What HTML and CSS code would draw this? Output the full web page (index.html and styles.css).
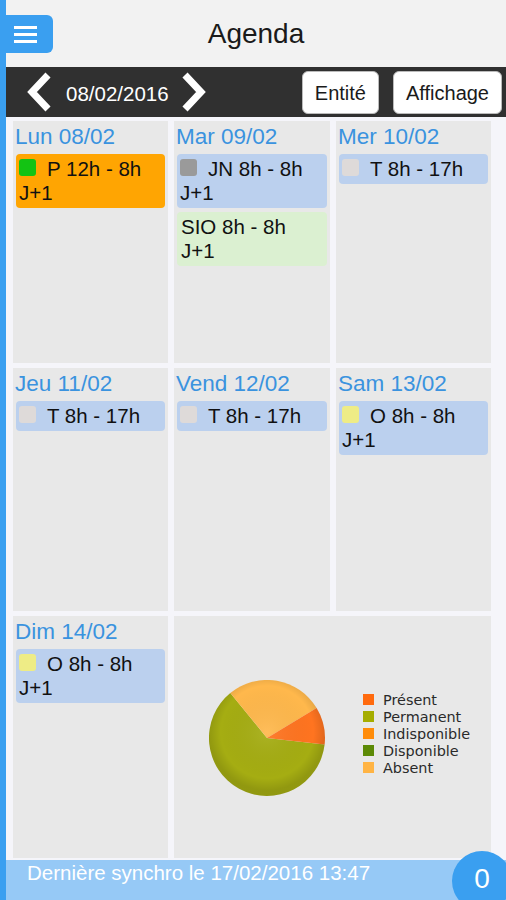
FILE: index.html
```html
<!DOCTYPE html>
<html lang="fr">
<head>
  <meta charset="UTF-8">
  <title>Agenda</title>
  <link rel="stylesheet" href="styles.css">
</head>
<body>
<div class="app">
  <div class="header">
    <div class="menu-btn">
      <svg width="24" height="18" viewBox="0 0 24 18">
        <rect x="0" y="1" width="23" height="3" fill="#fff"/>
        <rect x="0" y="8" width="23" height="3" fill="#fff"/>
        <rect x="0" y="15" width="23" height="3" fill="#fff"/>
      </svg>
    </div>
    <div class="title">Agenda</div>
    <div></div>
  </div>

  <div class="toolbar">
    <svg class="chevron" width="26" height="40" viewBox="0 0 26 40">
      <polyline points="22,3 6,20 22,37" fill="none" stroke="#fff" stroke-width="7"/>
    </svg>
    <span class="date">08/02/2016</span>
    <svg class="chevron" width="26" height="40" viewBox="0 0 26 40">
      <polyline points="4,3 20,20 4,37" fill="none" stroke="#fff" stroke-width="7"/>
    </svg>
    <div class="spacer"></div>
    <button class="btn">Entité</button>
    <button class="btn">Affichage</button>
  </div>

  <div class="week">
    <div class="day">
      <div class="day-label">Lun 08/02</div>
      <div class="events">
        <div class="event orange"><span class="dot green"></span>P 12h - 8h<br>J+1</div>
      </div>
    </div>
    <div class="day">
      <div class="day-label">Mar 09/02</div>
      <div class="events">
        <div class="event blue"><span class="dot grey"></span>JN 8h - 8h<br>J+1</div>
        <div class="event lightgreen">SIO 8h - 8h<br>J+1</div>
      </div>
    </div>
    <div class="day">
      <div class="day-label">Mer 10/02</div>
      <div class="events">
        <div class="event blue"><span class="dot pale"></span>T 8h - 17h</div>
      </div>
    </div>

    <div class="day">
      <div class="day-label">Jeu 11/02</div>
      <div class="events">
        <div class="event blue"><span class="dot pale"></span>T 8h - 17h</div>
      </div>
    </div>
    <div class="day">
      <div class="day-label">Vend 12/02</div>
      <div class="events">
        <div class="event blue"><span class="dot pale"></span>T 8h - 17h</div>
      </div>
    </div>
    <div class="day">
      <div class="day-label">Sam 13/02</div>
      <div class="events">
        <div class="event blue"><span class="dot yellow"></span>O 8h - 8h<br>J+1</div>
      </div>
    </div>

    <div class="day">
      <div class="day-label">Dim 14/02</div>
      <div class="events">
        <div class="event blue"><span class="dot yellow"></span>O 8h - 8h<br>J+1</div>
      </div>
    </div>
    <div class="day chart">
      <svg class="pie" width="116" height="116" viewBox="0 0 116 116">
        <defs>
          <radialGradient id="shade" cx="50%" cy="45%" r="50%">
            <stop offset="0%" stop-color="#fff" stop-opacity="0.08"/>
            <stop offset="80%" stop-color="#000" stop-opacity="0"/>
            <stop offset="100%" stop-color="#000" stop-opacity="0.12"/>
          </radialGradient>
        </defs>
        <path d="M58,58 L115.6,64.5 A58,58 0 1 1 21.3,13 Z" fill="#a5ad12"/>
        <path d="M58,58 L21.3,13 A58,58 0 0 1 107.6,28 Z" fill="#ffb84c"/>
        <path d="M58,58 L107.6,28 A58,58 0 0 1 115.6,64.5 Z" fill="#ff7420"/>
        <circle cx="58" cy="58" r="58" fill="url(#shade)"/>
      </svg>
      <ul class="legend">
        <li><span class="sw" style="background:#ff6a0e"></span>Présent</li>
        <li><span class="sw" style="background:#a5ad00"></span>Permanent</li>
        <li><span class="sw" style="background:#ff8c0a"></span>Indisponible</li>
        <li><span class="sw" style="background:#5c8a06"></span>Disponible</li>
        <li><span class="sw" style="background:#ffb444"></span>Absent</li>
      </ul>
    </div>
  </div>

  <div class="footer">
    <span class="sync">Dernière synchro le 17/02/2016 13:47</span>
    <div class="badge">0</div>
  </div>
</div>
</body>
</html>
```

FILE: styles.css
```css
body {
  margin: 0;
  width: 506px;
  height: 900px;
  overflow: hidden;
  font-family: "Liberation Sans", Arial, sans-serif;
  background-color: #f5f5fa;
}

.app {
  display: flex;
  flex-direction: column;
  height: 900px;
  border-left: 6px solid #3a9ff0;
}

.header {
  height: 67px;
  background-color: #f2f2f2;
  display: grid;
  grid-template-columns: 1fr auto 1fr;
  align-items: center;
}

.menu-btn {
  width: 47px;
  height: 38px;
  background-color: #3a9ff0;
  border-radius: 0 6px 6px 0;
  display: flex;
  align-items: center;
  padding-left: 8px;
  box-sizing: border-box;
}

.title {
  font-size: 28px;
  color: #1a1a1a;
}

.toolbar {
  height: 50px;
  background-color: #303030;
  display: flex;
  align-items: center;
  padding: 0 4px 0 20px;
}

.chevron {
  display: block;
}

.date {
  color: #fff;
  font-size: 20.5px;
  margin: 0 12px 0 14px;
  padding-top: 3px;
}

.spacer {
  flex: 1;
}

.btn {
  height: 43px;
  background-color: #fff;
  border: 1px solid #bbb;
  border-radius: 6px;
  font-family: "Liberation Sans", Arial, sans-serif;
  font-size: 20px;
  color: #1a1a1a;
  padding: 2px 12px 0;
  margin-left: 14px;
}

.week {
  flex: 1;
  display: grid;
  grid-template-columns: 155px 156px 155px;
  grid-template-rows: 1fr 1fr 1fr;
  gap: 5px 6px;
  padding: 4px 0 2px 7px;
}

.day {
  background-color: #e8e8e8;
}

.day-label {
  color: #3a93df;
  font-size: 22.5px;
  line-height: 27px;
  padding: 2px 0 0 2px;
}

.events {
  padding: 4px 3px;
}

.event {
  font-size: 20.5px;
  line-height: 24px;
  color: #111;
  padding: 3px 3px;
  border-radius: 4px;
  margin-bottom: 4px;
}

.event.orange {
  background-color: #ffa502;
}

.event.blue {
  background-color: #bbd0ee;
}

.event.lightgreen {
  background-color: #dbf0d1;
  padding-left: 4px;
}

.dot {
  display: inline-block;
  width: 17px;
  height: 17px;
  border-radius: 3px;
  margin-right: 11px;
}

.dot.green {
  background-color: #13c313;
}

.dot.grey {
  background-color: #9a9a9a;
}

.dot.pale {
  background-color: #dedad9;
}

.dot.yellow {
  background-color: #eeec86;
}

.chart {
  grid-column: 2 / 4;
  display: flex;
  align-items: center;
  padding-left: 35px;
}

.pie {
  display: block;
  margin-top: 3px;
}

.legend {
  list-style-type: none;
  margin: 0 0 4px 38px;
  padding: 0;
  font-family: "DejaVu Sans", Verdana, sans-serif;
  font-size: 14.4px;
  line-height: 17px;
  color: #2a2a2a;
}

.sw {
  display: inline-block;
  width: 11px;
  height: 11px;
  margin-right: 9px;
}

.footer {
  height: 40px;
  background-color: #96c9f6;
  position: relative;
}

.sync {
  display: block;
  color: #fff;
  font-size: 20.5px;
  line-height: 26px;
  padding-left: 21px;
}

.badge {
  position: absolute;
  left: 446px;
  top: -9px;
  width: 60px;
  height: 60px;
  border-radius: 50%;
  background-color: #3a9ff0;
  color: #fff;
  font-size: 28px;
  display: flex;
  align-items: center;
  justify-content: center;
  padding-bottom: 4px;
  box-sizing: border-box;
}
```
